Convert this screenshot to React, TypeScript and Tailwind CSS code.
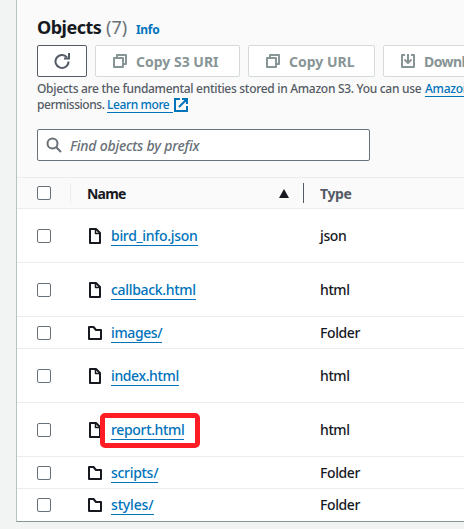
import React from "react";

type Item = { name: string; type: string; tall?: boolean; track: string; marked?: boolean };

const items: Item[] = [
  { name: "bird_info.json", type: "json", tall: true, track: "tracking-[-0.3px]" },
  { name: "callback.html", type: "html", tall: true, track: "tracking-[-0.32px]" },
  { name: "images/", type: "Folder", track: "tracking-[-0.38px]" },
  { name: "index.html", type: "html", tall: true, track: "tracking-[-0.38px]" },
  { name: "report.html", type: "html", tall: true, track: "tracking-[-0.34px]", marked: true },
  { name: "scripts/", type: "Folder", track: "tracking-[-0.3px]" },
  { name: "styles/", type: "Folder", track: "tracking-[-0.15px]" },
];

function Checkbox() {
  return <span className="block h-[14px] w-[14px] shrink-0 rounded-[2px] border border-[#687078] bg-white" />;
}

function FileIcon() {
  return (
    <svg className="block h-4 w-4 shrink-0" viewBox="0 0 16 16" fill="none" stroke="#16191f" strokeWidth="2" strokeLinejoin="round">
      <path d="M3 1h6l4 4v10H3z" />
      <path d="M8.5 1v4.5H13" strokeWidth="1.5" />
    </svg>
  );
}

function FolderIcon() {
  return (
    <svg className="block h-4 w-4 shrink-0" viewBox="0 0 16 16" fill="none" stroke="#16191f" strokeWidth="2" strokeLinejoin="round">
      <path d="M2 14V2h4.5l2.5 3h5v9z" />
    </svg>
  );
}

function CopyIcon() {
  return (
    <svg className="block h-4 w-4 shrink-0" viewBox="0 0 16 16" fill="none" stroke="#879596" strokeWidth="2" strokeLinejoin="round">
      <path d="M2 5h9v9H2z" />
      <path d="M5 5V2h9v9h-3" />
    </svg>
  );
}

function DownloadIcon() {
  return (
    <svg className="block h-4 w-4 shrink-0" viewBox="0 0 16 16" fill="none" stroke="#879596" strokeWidth="2" strokeLinejoin="round">
      <path d="M5 2H2v12h12V2h-3" />
      <path d="M8 1v9M4.5 6.5L8 10l3.5-3.5" />
    </svg>
  );
}

export default function App() {
  return (
    <div className="h-[529px] w-[464px] overflow-hidden bg-[#f2f3f3] pl-4 font-['Noto_Sans',sans-serif] font-medium text-[#16191f]">
      <div className="h-[522px] w-[600px] border-b border-l border-b-[#879596] border-l-[#b8c2c3] bg-white">
        <header className="h-[177px] bg-[#fafafa] pl-5 pt-[15px]">
          <div className="flex h-[24px] items-baseline whitespace-nowrap">
            <h2 className="w-[69px] text-[18px] font-bold leading-6 tracking-[-0.5px]">Objects</h2>
            <span className="w-[30px] text-[18px] font-normal leading-6 text-[#687078]">(7)</span>
            <a className="text-[12px] font-bold leading-6 tracking-[-0.3px] text-[#0073bb]">Info</a>
          </div>
          <div className="mt-[6px] flex gap-2 whitespace-nowrap text-[14px] font-bold text-[#879596]">
            <button className="flex h-8 w-[50px] items-center justify-center rounded-[2px] border border-[#545b64] bg-white">
              <svg className="block h-4 w-4" viewBox="0 0 16 16" fill="none" stroke="#545b64" strokeWidth="2">
                <path d="M14.5 8.5A6.5 6.5 0 1 1 13 4.3" />
                <path d="M15 0v5.5H10" />
              </svg>
            </button>
            <button className="flex h-8 w-[145px] items-center gap-2 rounded-[2px] border border-[#d5dbdb] bg-white pl-4"><CopyIcon />Copy S3 URI</button>
            <button className="flex h-8 w-[127px] items-center gap-2 rounded-[2px] border border-[#d5dbdb] bg-white pl-4"><CopyIcon />Copy URL</button>
            <button className="flex h-8 w-[127px] items-center gap-2 rounded-[2px] border border-[#d5dbdb] bg-white pl-4 tracking-[-0.6px]"><DownloadIcon />Download</button>
          </div>
          <div className="mt-1 h-8 whitespace-nowrap text-[12px] leading-4 text-[#545b64]">
            <p className="flex">
              <span className="w-[388px] tracking-[-0.3px]">Objects are the fundamental entities stored in Amazon S3. You can use</span>
              <a className="h-4 border-b border-[#0073bb] tracking-[-0.27px] text-[#0073bb]">Amazon S3 inventory</a>
            </p>
            <p className="flex">
              <span className="w-[70px] tracking-[-0.45px]">permissions.</span>
              <a className="h-4 w-[66px] border-b border-[#0073bb] text-[#0073bb] tracking-[-0.4px]">Learn more</a>
              <svg className="block h-4 w-4" viewBox="0 0 16 16" fill="none" stroke="#0073bb" strokeWidth="2">
                <path d="M7 2H2v12h12V9M9 2h5v5M14 2L6 10" />
              </svg>
            </p>
          </div>
          <div className="mt-4 flex h-8 w-[333px] items-center rounded-[2px] border border-[#687078] bg-white pl-2 text-[14px] italic text-[#687078]">
            <svg className="mr-2 block h-4 w-4 shrink-0" viewBox="0 0 16 16" fill="none" stroke="#687078" strokeWidth="2">
              <circle cx="6.5" cy="6.5" r="5" /><path d="M10 10l5 5" />
            </svg>
            <span className="tracking-[-0.2px]">Find objects by prefix</span>
          </div>
        </header>
        <div className="flex h-8 items-center border-y border-[#eaeded] bg-[#fafafa] pl-5 text-[14px] font-bold">
          <Checkbox />
          <span className="ml-[19px] h-5 w-px bg-[#eaeded]" />
          <span className="ml-4 w-[192px] tracking-[-0.8px]">Name</span>
          <svg className="block h-[9px] w-[10px]" viewBox="0 0 10 9"><path d="M5 0l5 9H0z" fill="#16191f" /></svg>
          <span className="ml-[14px] h-5 w-px bg-[#545b64]" />
          <span className="ml-4 text-[#545b64] tracking-[-0.4px]">Type</span>
        </div>
        {items.map((item) => (
          <div key={item.name} className={`${item.tall ? "h-[54px]" : "h-8"} flex items-center border-b border-[#eaeded] pl-5 text-[14px] last:border-transparent`}>
            <Checkbox />
            <div className="relative ml-[36px] flex w-[233px] items-center">
              {item.name.endsWith("/") ? <FolderIcon /> : <FileIcon />}
              <a className={`${item.track} ml-2 h-5 border-b border-[#0073bb] leading-5 text-[#0073bb]`}>{item.name}</a>
              {item.marked && <span className="absolute -top-[7px] left-[13px] h-[35px] w-[100px] rounded-[5px] border-[5px] border-[#ff1c24]" />}
            </div>
            <span className="tracking-[-0.4px]">{item.type}</span>
          </div>
        ))}
      </div>
    </div>
  );
}
